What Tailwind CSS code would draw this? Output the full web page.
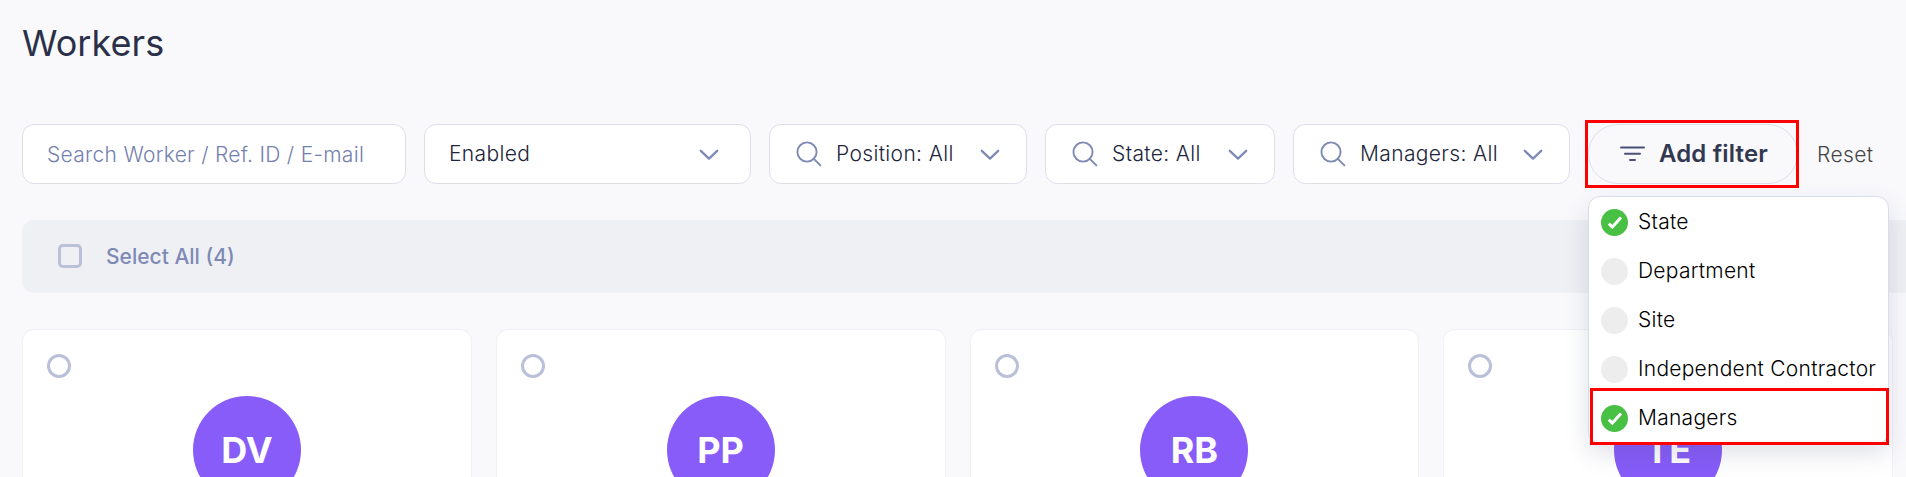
<!DOCTYPE html>
<html lang="en">
<head>
<meta charset="utf-8">
<title>Workers</title>
<script src="https://cdn.jsdelivr.net/npm/@tailwindcss/browser@4"></script>
</head>
<body class="h-[477px] overflow-hidden bg-[#f9f9fc] font-['Inter',sans-serif] text-[21px] font-light text-[#20253c]">
<svg class="hidden">
  <symbol id="search" viewBox="0 0 26 26"><g fill="none" stroke="#7e8ab5" stroke-width="1.9" stroke-linecap="round"><circle cx="11" cy="11" r="9.6"/><path d="M17.8 17.8 24.4 24.4"/></g></symbol>
  <symbol id="chevron" viewBox="0 0 20 12"><path d="M1.8 1.8 10 9.6 18.2 1.8" fill="none" stroke="#7e8ab5" stroke-width="2.3" stroke-linecap="round" stroke-linejoin="round"/></symbol>
  <symbol id="check" viewBox="0 0 27 27"><circle cx="13.5" cy="13.5" r="13.5" fill="#48c043"/><path d="M7.8 14.7 11.3 18.1 20 8.6" fill="none" stroke="#fff" stroke-width="3"/></symbol>
</svg>
<main class="flex h-[477px] w-[1906px] flex-col overflow-hidden pl-[22px]">
  <h1 class="mt-[16px] h-[54px] shrink-0 text-[36px] leading-[54px] font-normal tracking-[0.05px] text-[#2b3049]">Workers</h1>

  <div class="mt-[54px] flex h-[60px] shrink-0 gap-[18px] tracking-[0.36px]">
    <div class="flex w-[384px] items-center rounded-xl border border-[#dddeea] bg-white pt-[2px] pl-[24px] tracking-[0.29px] text-[#7480ae]">Search Worker / Ref. ID / E-mail</div>
    <div class="flex w-[327px] items-center justify-between rounded-xl border border-[#dddeea] bg-white pr-[31px] pl-[24px]">Enabled<svg class="mt-[2px] h-3 w-5"><use href="#chevron"/></svg></div>
    <div class="flex w-[258px] items-center rounded-xl border border-[#dddeea] bg-white pr-[26px] pl-[26px]"><svg class="mr-[14px] h-[26px] w-[26px]"><use href="#search"/></svg><span class="flex-1 whitespace-nowrap">Position: All</span><svg class="mt-[1px] h-3 w-5"><use href="#chevron"/></svg></div>
    <div class="flex w-[230px] items-center rounded-xl border border-[#dddeea] bg-white pr-[26px] pl-[26px]"><svg class="mr-[14px] h-[26px] w-[26px]"><use href="#search"/></svg><span class="flex-1 whitespace-nowrap">State: All</span><svg class="mt-[1px] h-3 w-5"><use href="#chevron"/></svg></div>
    <div class="flex w-[277px] items-center rounded-xl border border-[#dddeea] bg-white pr-[26px] pl-[26px]"><svg class="mr-[14px] h-[26px] w-[26px]"><use href="#search"/></svg><span class="flex-1 whitespace-nowrap">Managers: All</span><svg class="mt-[1px] h-3 w-5"><use href="#chevron"/></svg></div>
    <div class="relative flex w-[210px] items-center rounded-full border border-[#dddeea] pl-[31px]">
      <svg class="mr-[14px] h-[18px] w-[25px]" viewBox="0 0 25 18"><path d="M1 2.5h23M5 8.7h15M10 15h5" stroke="#48507a" stroke-width="2" stroke-linecap="round"/></svg>
      <span class="text-[24px] font-semibold tracking-[0.15px] whitespace-nowrap text-[#323850]">Add filter</span>
      <div class="absolute top-[-5px] left-[-4px] h-[68px] w-[214px] border-[3px] border-[#f00]"></div>

      <div class="absolute top-[71px] left-[-1px] z-10 flex h-[248px] w-[301px] flex-col rounded-xl border border-[#d9dcea] bg-white pt-[1px] pl-[12px] tracking-[0.26px] text-black shadow-[0_10px_24px_rgba(60,70,110,0.16)]">
        <div class="flex h-[49px] items-center gap-[10px]"><svg class="size-[27px]"><use href="#check"/></svg><span class="pb-[2px]">State</span></div>
        <div class="flex h-[49px] items-center gap-[10px]"><div class="size-[27px] rounded-full bg-[#ededed]"></div><span class="pb-[2px]">Department</span></div>
        <div class="flex h-[49px] items-center gap-[10px]"><div class="size-[27px] rounded-full bg-[#ededed]"></div><span class="pb-[2px]">Site</span></div>
        <div class="flex h-[49px] items-center gap-[10px]"><div class="size-[27px] rounded-full bg-[#ededed]"></div><span class="pb-[2px] whitespace-nowrap">Independent Contractor</span></div>
        <div class="flex h-[49px] items-center gap-[10px]"><svg class="size-[27px]"><use href="#check"/></svg><span class="pb-[2px]">Managers</span></div>
        <div class="absolute top-[191px] left-[1px] h-[57px] w-[299px] border-[3px] border-[#f00]"></div>
      </div>
    </div>
    <div class="flex items-center pt-[2px] pl-[1px] text-[#444]">Reset</div>
  </div>

  <div class="mt-[36px] flex h-[73px] shrink-0 items-center rounded-l-xl bg-[#eff0f4] pl-[36px] font-medium text-[#7e8ab5]">
    <div class="mr-[24px] mb-px size-6 rounded-[5px] border-[3px] border-[#b9c0d8]"></div>Select All (4)
  </div>

  <div class="mt-[36px] grid w-[1871px] grid-cols-4 gap-6 text-[36px] font-bold text-white">
    <div class="flex h-[300px] flex-col rounded-xl border border-[#f0f0f5] bg-white pt-[24px]">
      <div class="ml-[24px] size-6 rounded-full border-[3px] border-[#b9c0d8]"></div>
      <div class="mt-[18px] flex size-[108px] items-center justify-center self-center rounded-full bg-[#875cf8]">DV</div>
    </div>
    <div class="flex h-[300px] flex-col rounded-xl border border-[#f0f0f5] bg-white pt-[24px]">
      <div class="ml-[24px] size-6 rounded-full border-[3px] border-[#b9c0d8]"></div>
      <div class="mt-[18px] flex size-[108px] items-center justify-center self-center rounded-full bg-[#875cf8]">PP</div>
    </div>
    <div class="flex h-[300px] flex-col rounded-xl border border-[#f0f0f5] bg-white pt-[24px]">
      <div class="ml-[24px] size-6 rounded-full border-[3px] border-[#b9c0d8]"></div>
      <div class="mt-[18px] flex size-[108px] items-center justify-center self-center rounded-full bg-[#875cf8]">RB</div>
    </div>
    <div class="flex h-[300px] flex-col rounded-xl border border-[#f0f0f5] bg-white pt-[24px]">
      <div class="ml-[24px] size-6 rounded-full border-[3px] border-[#b9c0d8]"></div>
      <div class="mt-[18px] flex size-[108px] items-center justify-center self-center rounded-full bg-[#875cf8]">TE</div>
    </div>
  </div>
</main>
</body>
</html>
